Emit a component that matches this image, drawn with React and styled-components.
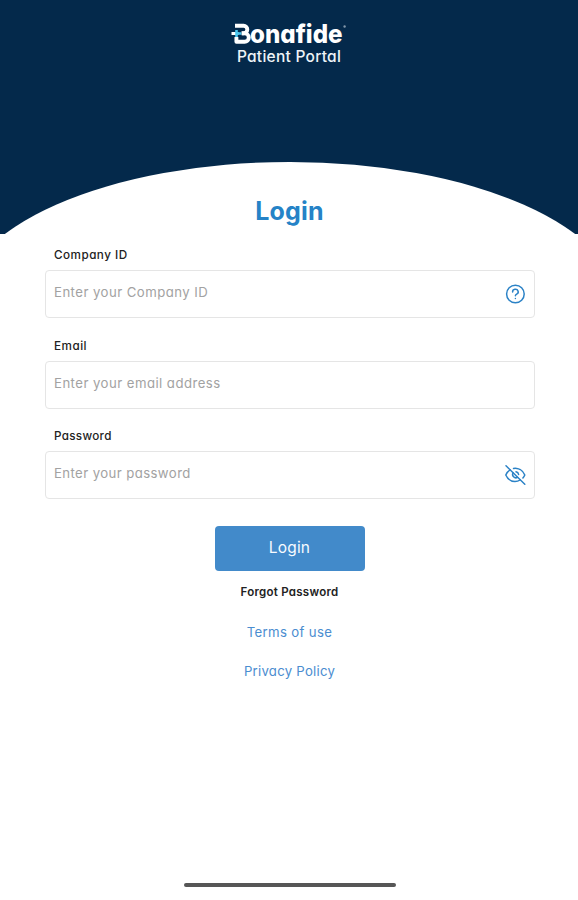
import React from "react";
import styled, { createGlobalStyle } from "styled-components";

const GlobalStyle = createGlobalStyle`
  * { box-sizing: border-box; }
  body { margin: 0; background: #fff; }
`;

const Screen = styled.div`
  width: 578px;
  height: 900px;
  overflow: hidden;
  display: flex;
  flex-direction: column;
  align-items: center;
  background: #fff;
  padding-left: 1px;
  font-family: Inter, "Noto Sans", sans-serif;
  font-feature-settings: "cv11";
`;

const Hero = styled.header`
  position: relative;
  flex: none;
  width: 578px;
  height: 234px;
  margin-left: -1px;
  overflow: hidden;
  background: #04294b;
  display: flex;
  flex-direction: column;
  align-items: center;
  padding-top: 20px;

  &::after {
    content: "";
    position: absolute;
    left: -40px;
    top: 162px;
    width: 660px;
    height: 290px;
    border-radius: 50%;
    background: #fff;
  }
`;

const Logo = styled.svg`
  display: block;
  width: 120px;
  height: 28px;
  overflow: visible;
`;

const Portal = styled.div`
  font-size: 15.5px;
  font-weight: 500;
  line-height: 18px;
  letter-spacing: 0.26px;
  color: #eef3f7;
`;

const Title = styled.h1`
  flex: none;
  margin: -43px 0 0;
  position: relative;
  height: 40px;
  line-height: 40px;
  font-size: 25px;
  font-weight: 700;
  letter-spacing: 0.2px;
  color: #2583c7;
`;

const Form = styled.form`
  flex: none;
  width: 490px;
  margin-top: 14px;
  display: flex;
  flex-direction: column;
  align-items: center;
`;

const Field = styled.label`
  width: 490px;
  height: 90.5px;
  display: flex;
  flex-direction: column;
`;

const FieldName = styled.span`
  height: 20px;
  line-height: 20px;
  margin: 0 0 5px 9.5px;
  font-size: 11.7px;
  font-weight: 500;
  letter-spacing: ${(p) => p.$track}px;
  color: #222;
`;

const InputBox = styled.span`
  display: flex;
  align-items: center;
  justify-content: space-between;
  height: 48px;
  padding: 0 8px 0 8.5px;
  border: 1px solid #e5e5e5;
  border-radius: 4px;
`;

const Input = styled.input`
  flex: 1;
  min-width: 0;
  height: 30px;
  margin-top: -4px;
  padding: 0;
  border: 0;
  outline: 0;
  background: transparent;
  font: 400 13.2px Inter, "Noto Sans", sans-serif;
  font-feature-settings: "cv11";
  letter-spacing: ${(p) => p.$track}px;
  &::placeholder { color: #a2a2a2; opacity: 1; }
`;

const Icon = styled.svg`
  flex: none;
  width: 22px;
  height: 22px;
  fill: none;
  stroke: #2b82c6;
  stroke-width: 1.5;
  stroke-linecap: round;
  stroke-linejoin: round;
`;

const Submit = styled.button`
  width: 150px;
  height: 45px;
  margin-top: 9px;
  padding: 0 0 2px;
  border: 0;
  border-radius: 4px;
  background: #428aca;
  color: #f7fbff;
  font: 400 15.5px Inter, "Noto Sans", sans-serif;
  letter-spacing: 0.2px;
`;

const Forgot = styled.a`
  margin-top: 11.5px;
  line-height: 20px;
  font-size: 11.5px;
  font-weight: 600;
  letter-spacing: 0.26px;
  color: #222;
`;

const PolicyLink = styled.a`
  margin-top: ${(p) => p.$gap}px;
  height: 20px;
  line-height: 20px;
  font-size: 13.2px;
  letter-spacing: ${(p) => p.$track}px;
  color: #4b8dd0;
`;

const HomeBar = styled.div`
  flex: none;
  width: 212px;
  height: 4px;
  margin: auto 0 13px;
  border-radius: 2px;
  background: #565656;
`;

function BonafideLogo() {
  return (
    <Logo viewBox="0 0 120 28" role="img" aria-label="Bonafide">
      <g fill="none" stroke="#fff" strokeWidth="3.9" strokeLinejoin="round">
        <path d="M6 5.8H14.6a3.6 3.6 0 0 1 0 7.4H12.5" />
        <path d="M13 13.4h2.6a4.2 4.2 0 0 1 0 8.4H7.4V17" />
      </g>
      <path d="M2.5 13.5h7" stroke="#fff" strokeWidth="3" />
      <path d="M7.5 10v7M7.5 13.5h4.8" stroke="#49c7ef" strokeWidth="2.6" />
      <text
        x="21"
        y="23.4"
        textLength="92.5"
        lengthAdjust="spacingAndGlyphs"
        fill="#fff"
        fontFamily="Inter, sans-serif"
        fontSize="25.5"
        fontWeight="800"
      >
        onafide
      </text>
      <circle cx="115.6" cy="6.5" r="1.2" fill="#8297aa" />
    </Logo>
  );
}

function HelpIcon() {
  return (
    <Icon viewBox="0 0 22 22" aria-hidden="true">
      <circle cx="11.4" cy="11" r="8.8" />
      <path d="M8.6 9a2.8 2.6 0 1 1 4.1 2.2c-1 .5-1.3.8-1.3 1.6M11.4 15.4v.1" />
    </Icon>
  );
}

function HiddenIcon() {
  return (
    <Icon viewBox="0 0 22 22" aria-hidden="true">
      <path d="M2 1.8 20.8 20.2" />
      <path d="M6.1 5.8C4.1 7 2.7 8.9 1.8 11c1.8 4 5.2 6.6 9.2 6.6 2 0 3.7-.6 5.1-1.6" />
      <path d="M9.5 4.5c4.9-.8 9.3 2 11.3 6.5-.5 1.1-1.1 2.1-1.9 3" />
      <path d="M9.1 8.9a3.2 3.2 0 0 0 4.4 4.4M12 7.8a3.2 3.2 0 0 1 2.6 2.7" />
    </Icon>
  );
}

export default function App() {
  return (
    <>
      <GlobalStyle />
      <Screen>
        <Hero>
          <BonafideLogo />
          <Portal>Patient Portal</Portal>
        </Hero>
        <Title>Login</Title>
        <Form onSubmit={(e) => e.preventDefault()}>
          <Field>
            <FieldName $track={0.48}>Company ID</FieldName>
            <InputBox>
              <Input $track={0.45} placeholder="Enter your Company ID" />
              <HelpIcon />
            </InputBox>
          </Field>
          <Field>
            <FieldName $track={0.5}>Email</FieldName>
            <InputBox>
              <Input $track={0.45} type="email" placeholder="Enter your email address" />
            </InputBox>
          </Field>
          <Field>
            <FieldName $track={0.3}>Password</FieldName>
            <InputBox>
              <Input $track={0.4} type="password" placeholder="Enter your password" />
              <HiddenIcon />
            </InputBox>
          </Field>
          <Submit>Login</Submit>
          <Forgot>Forgot Password</Forgot>
          <PolicyLink $gap={19.5} $track={0.35}>Terms of use</PolicyLink>
          <PolicyLink $gap={19} $track={0.25}>Privacy Policy</PolicyLink>
        </Form>
        <HomeBar />
      </Screen>
    </>
  );
}
